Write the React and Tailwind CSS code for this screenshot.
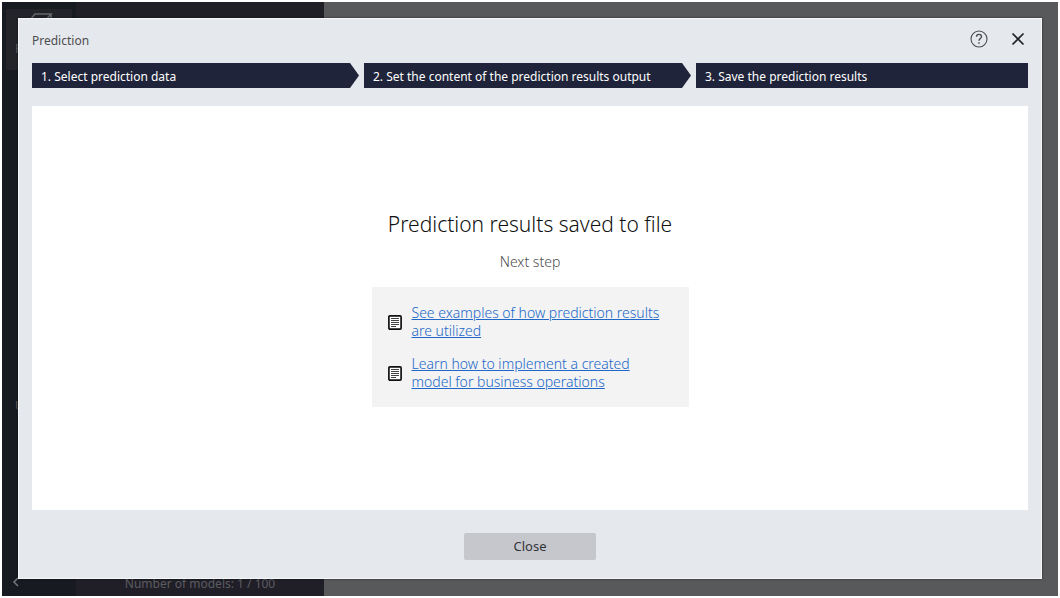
import React from "react";

const STEPS = [
  "1. Select prediction data",
  "2. Set the content of the prediction results output",
  "3. Save the prediction results",
];

const LINKS = [
  "See examples of how prediction results are utilized",
  "Learn how to implement a created model for business operations",
];

function DocumentIcon() {
  return (
    <svg className="h-[15px] w-[14px] shrink-0" viewBox="0 0 14 15" fill="none" stroke="#111111" aria-hidden="true">
      <rect x="0.9" y="0.9" width="12.2" height="13.2" rx="1" strokeWidth="1.7" fill="#ffffff" />
      <path d="M3 3.5h8M3 5.5h8M3 7.5h8M3 9.5h8M3 11.5h5" strokeWidth="0.8" />
    </svg>
  );
}

function Background() {
  return (
    <div className="flex h-full bg-[#58595b] text-[#5c5c60]">
      <nav className="flex w-[74px] flex-col bg-[#181a22] p-1 text-xs">
        <div className="mt-[3px] flex h-[61px] flex-col bg-[#23232a] pt-1">
          <svg className="ml-5 h-6 w-7" viewBox="0 0 28 24" fill="none" stroke="#66676a" strokeWidth="1.5" aria-hidden="true">
            <path d="M3 8 9 1h16l-6 7H3v14h16V8M25 1v14l-6 7" />
          </svg>
          <span className="ml-[9px] pt-1">P</span>
        </div>
        <span className="mt-auto mb-[162px] ml-[9px]">U</span>
        <svg className="mb-1 ml-1.5 h-3 w-2" viewBox="0 0 8 12" fill="none" stroke="#77787a" strokeWidth="1.5" aria-hidden="true">
          <path d="M6 2 2 6l4 4" />
        </svg>
      </nav>
      <div className="flex w-[248px] items-end justify-center bg-[#201f28] text-xs leading-6">
        Number of models: 1 / 100
      </div>
    </div>
  );
}

function Step({ label, last }) {
  return (
    <li
      className={
        last
          ? "flex items-center bg-[#20243a] pt-0.5 pl-[9px]"
          : "mr-[5px] flex items-center bg-[#20243a] pt-0.5 pl-[9px] [clip-path:polygon(0_0,calc(100%-9px)_0,100%_50%,calc(100%-9px)_100%,0_100%)]"
      }
    >
      {label}
    </li>
  );
}

export default function App() {
  return (
    <div className="relative h-screen overflow-hidden bg-white p-0.5 font-['Noto_Sans',sans-serif]">
      <Background />
      <section
        role="dialog"
        aria-labelledby="dialog-title"
        className="absolute inset-x-[18px] top-[18px] bottom-[19px] flex flex-col border border-[#f4f6f8] bg-[#e5e8ed] px-[13px] shadow-[0_0_2px_rgba(0,0,0,0.6)]"
      >
        <header className="flex h-11 shrink-0 items-center justify-between">
          <h1 id="dialog-title" className="text-xs text-[#4c4d50]">Prediction</h1>
          <div className="flex items-center gap-[21px] pr-px pb-1">
            <button type="button" aria-label="Help">
              <svg className="h-[18px] w-[18px]" viewBox="0 0 18 18" fill="none" stroke="#4a4b4e" aria-hidden="true">
                <circle cx="9" cy="9" r="8" strokeWidth="1.1" />
                <path d="M6.5 6.8C6.5 5.2 7.6 4.4 9 4.4s2.5.9 2.5 2.2c0 1.9-2.5 2-2.5 4.2" strokeWidth="1.4" />
                <path d="M9 12.2v1.6" strokeWidth="1.5" />
              </svg>
            </button>
            <button type="button" aria-label="Close dialog" className="p-0.5">
              <svg className="h-3.5 w-3.5" viewBox="0 0 14 14" fill="none" stroke="#202124" strokeWidth="1.7" aria-hidden="true">
                <path d="M1.5 1.5l11 11M12.5 1.5l-11 11" />
              </svg>
            </button>
          </div>
        </header>
        <ol className="grid h-[25px] shrink-0 grid-cols-3 text-xs text-white">
          {STEPS.map((label, i) => (
            <Step key={label} label={label} last={i === STEPS.length - 1} />
          ))}
        </ol>
        <main className="mt-[18px] flex flex-1 flex-col items-center bg-white pt-[102px]">
          <h2 className="text-[21px] leading-8 font-light text-[#111111]">Prediction results saved to file</h2>
          <p className="mt-2.5 text-sm leading-6 font-light text-[#4c4d50]">Next step</p>
          <ul className="mt-[13px] flex w-[317px] flex-col gap-[15px] bg-[#f3f3f3] px-4 pt-[17px] pb-4">
            {LINKS.map((text) => (
              <li key={text} className="flex items-center gap-2.5">
                <DocumentIcon />
                <a href="#" className="text-sm leading-[18px] font-light text-[#2067c8] underline">
                  {text}
                </a>
              </li>
            ))}
          </ul>
        </main>
        <footer className="flex h-[68px] shrink-0 items-center justify-center pb-px">
          <button type="button" className="mt-1.5 h-[27px] w-[132px] rounded-xs bg-[#c6c7cc] text-[13px] text-[#333438]">
            Close
          </button>
        </footer>
      </section>
    </div>
  );
}
